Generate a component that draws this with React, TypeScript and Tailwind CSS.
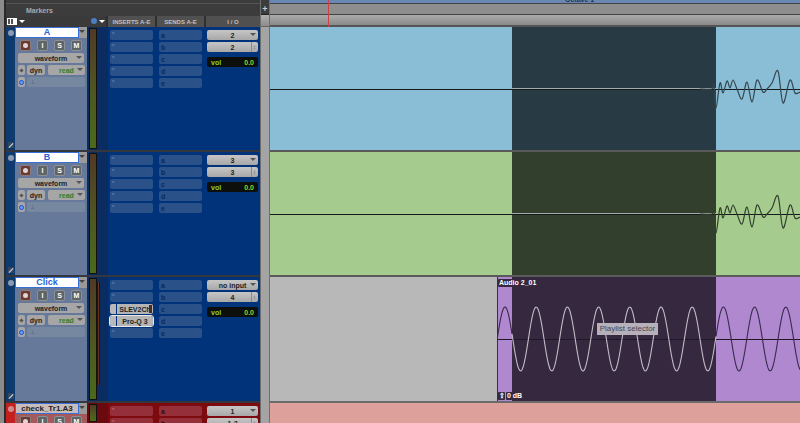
type Track = {
  name: string;
  input: string;
  output: string;
  inserts: (string | null)[];
  height: string;
};

// break points of the audio transient, x from the left of the drawing, y from the top of the lane
const TRANSIENT: [number, number][] = [
  [0, 62], [12, 62], [14, 58], [16, 81], [20, 56], [23, 66], [27, 54], [30, 61], [33, 53], [37, 62], [42, 72],
  [47, 55], [52, 75], [57, 53], [63, 65], [67, 62], [72, 56], [78, 44], [83, 76], [90, 53], [95, 66], [100, 65],
];

// Catmull-Rom through the points so the peaks stay where they are
function smoothPath(points: [number, number][]) {
  let d = `M${points[0][0]} ${points[0][1]}`;
  for (let i = 0; i < points.length - 1; i++) {
    const p0 = points[Math.max(i - 1, 0)];
    const p1 = points[i];
    const p2 = points[i + 1];
    const p3 = points[Math.min(i + 2, points.length - 1)];
    const c1x = p1[0] + (p2[0] - p0[0]) / 6;
    const c1y = p1[1] + (p2[1] - p0[1]) / 6;
    const c2x = p2[0] - (p3[0] - p1[0]) / 6;
    const c2y = p2[1] - (p3[1] - p1[1]) / 6;
    d += ` C${c1x} ${c1y} ${c2x} ${c2y} ${p2[0]} ${p2[1]}`;
  }
  return d;
}

function sinePath(from: number, to: number, mid: number, amp: number, period: number, peakAt: number) {
  const pts: string[] = [];
  for (let x = from; x <= to; x++) {
    const y = mid - amp * Math.cos(((x - peakAt) / period) * Math.PI * 2);
    pts.push(`${x === from ? "M" : "L"}${x} ${y.toFixed(2)}`);
  }
  return pts.join(" ");
}

function Chevron({ color = "border-t-[#555]" }: { color?: string }) {
  return <span className={`absolute right-[2px] top-[3px] h-0 w-0 border-x-[3px] border-t-[3px] border-x-transparent ${color}`} />;
}

function SmallButton({ label }: { label: string }) {
  return (
    <div className="flex h-[11px] w-[11px] items-center justify-center rounded-[2px] border border-[#8c9097] bg-[#5f6469] text-[7px] font-bold leading-none text-white">
      {label}
    </div>
  );
}

function TrackControls({ name, red }: { name: string; red?: boolean }) {
  return (
    <div className={`flex h-full w-[72px] shrink-0 flex-col ${red ? "bg-[#a45a5a]" : "bg-[#66799b]"}`}>
      <div className="flex h-[11px] shrink-0 items-stretch">
        {red ? (
          <div className="flex w-[64px] items-center justify-center overflow-hidden border border-[#3b6fd8] bg-[#c8bcbc] text-[8px] font-bold leading-none text-[#222]">
            {name}
          </div>
        ) : (
          <div className="flex w-[64px] items-center justify-center overflow-hidden border border-[#3b6fd8] bg-white text-[9px] font-bold leading-none text-[#2b63d8]">
            {name}
          </div>
        )}
        <div className="relative flex-1 bg-[#9a9a9a]">
          <Chevron color="border-t-[#444]" />
        </div>
      </div>
      <div className="mt-[2px] flex gap-[6px] pl-[5px]">
        <div className="flex h-[11px] w-[11px] items-center justify-center rounded-[2px] border border-[#8c7c7a] bg-[#6b3a36]">
          <span className="h-[5px] w-[5px] rounded-full bg-[#e0d4d4]" />
        </div>
        <SmallButton label="I" />
        <SmallButton label="S" />
        <SmallButton label="M" />
      </div>
      <div className="relative mx-[3px] mt-[2px] flex h-[10px] shrink-0 items-center justify-center rounded-[2px] bg-[#a6a6a6] text-[7px] font-bold leading-none text-[#222]">
        waveform
        <Chevron />
      </div>
      <div className="mt-[2px] flex h-[10px] shrink-0 pl-[3px]">
        <div className="flex w-[7px] items-center justify-center rounded-[2px] bg-[#a6a6a6]">
          <span className="h-[3px] w-[3px] rotate-45 bg-[#555]" />
        </div>
        <div className="ml-[2px] flex w-[18px] items-center justify-center rounded-[2px] bg-[#a6a6a6] text-[7px] font-bold leading-none text-[#222]">
          dyn
        </div>
        <div className="relative ml-[3px] flex w-[37px] items-center justify-center rounded-[2px] bg-[#a6a6a6] text-[7px] font-bold leading-none text-[#2f7d2f]">
          read
          <Chevron />
        </div>
      </div>
      <div className="mt-[2px] flex h-[10px] shrink-0 pl-[3px]">
        <div className="flex w-[7px] items-center justify-center rounded-[2px] bg-[#a6a6a6]">
          <span className="h-[5px] w-[5px] rounded-full border border-[#1c4fd0] bg-[#6d9cf0]" />
        </div>
        <div className="ml-[2px] mr-[2px] flex flex-1 items-center rounded-[2px] bg-[#76889f] pl-[3px] text-[6px] leading-none text-[#505a68]">
          ⊥
        </div>
      </div>
    </div>
  );
}

function Sends({ items, slotColor, textColor }: { items: string[]; slotColor: string; textColor: string }) {
  return (
    <div className="flex w-[49px] shrink-0 flex-col gap-[2px] px-[3px] pt-[3px]">
      {items.map((item) => (
        <div key={item} className={`flex h-[10px] shrink-0 items-center rounded-[2px] pl-[2px] text-[7px] font-bold leading-none ${slotColor} ${textColor}`}>
          {item}
        </div>
      ))}
    </div>
  );
}

function Inserts({ items, slotColor, textColor }: { items: (string | null)[]; slotColor: string; textColor: string }) {
  return (
    <div className="flex w-[48px] shrink-0 flex-col gap-[2px] pl-[2px] pr-[3px] pt-[3px]">
      {items.map((item, i) =>
        item ? (
          <div
            key={i}
            className={`flex h-[10px] shrink-0 items-stretch gap-[1px] rounded-[2px] text-[7px] font-bold leading-none text-[#222] ${i === 3 ? "outline outline-1 outline-[#e8e8e8]" : ""}`}
          >
            <div className="w-[6px] rounded-l-[2px] bg-[#b9b9b9]" />
            <div className="relative flex flex-1 items-center justify-center rounded-r-[2px] bg-[#b4b4b4]">
              {item}
              {i === 2 && <span className="absolute right-[1px] top-[1px] h-[8px] w-[3px] bg-[#4d2c20]" />}
            </div>
          </div>
        ) : (
          <div key={i} className={`flex h-[10px] shrink-0 items-start rounded-[2px] pl-[2px] pt-[1px] text-[6px] leading-none ${slotColor} ${textColor}`}>
            *
          </div>
        ),
      )}
    </div>
  );
}

function IOColumn({ input, output }: { input: string; output: string }) {
  return (
    <div className="flex w-[53px] shrink-0 flex-col pl-[2px] pt-[3px]">
      <div className="relative flex h-[10px] shrink-0 items-center justify-center rounded-[2px] bg-gradient-to-b from-[#c6c6c6] to-[#a8a8a8] text-[7px] font-bold leading-none text-[#222]">
        {input}
        <Chevron />
      </div>
      <div className="relative mt-[2px] flex h-[10px] shrink-0 items-center justify-center rounded-[2px] bg-gradient-to-b from-[#c6c6c6] to-[#a8a8a8] text-[7px] font-bold leading-none text-[#222]">
        {output}
        <span className="absolute right-[1px] top-0 flex h-full w-[6px] items-center justify-center border-l border-[#8a8a8a] text-[6px] leading-none text-[#666]">
          ↕
        </span>
      </div>
      <div className="mt-[5px] flex h-[10px] shrink-0 items-center justify-between rounded-[2px] bg-[#0d0f0d] px-[4px] text-[7px] font-bold leading-none text-[#8fd42a]">
        <span>vol</span>
        <span>0.0</span>
      </div>
    </div>
  );
}

// level meter plus the dark run up to the inserts column
function Meter({ peak, gutter }: { peak?: boolean; gutter: string }) {
  return (
    <div className={`relative h-full w-[21px] shrink-0 ${gutter}`}>
      <div className="absolute bottom-[1px] left-[2px] top-[1px] w-[8px] border border-[#111] bg-gradient-to-b from-[#4f3a26] via-[#4f5522] to-[#4b6a1a]" />
      {peak && <div className="absolute left-[10px] top-[5px] h-[103px] w-[3px] border-x border-[#1c1410] bg-[#6a3420]" />}
    </div>
  );
}

function TrackRow({ track }: { track: Track }) {
  return (
    <div className={`flex ${track.height} shrink-0 border-b-2 border-[#34373d]`}>
      <div className="flex w-[9px] shrink-0 flex-col items-center justify-between bg-[#0f3a70] pb-[2px] pt-[3px]">
        <span className="h-[6px] w-[6px] rounded-full bg-[#8c9bb0]" />
        <span className="flex h-[6px] w-[6px] items-center justify-center bg-[#33475f]">
          <span className="h-[1px] w-[6px] -rotate-45 bg-[#d8dde4]" />
        </span>
      </div>
      <TrackControls name={track.name} />
      <Meter peak={track.name === "Click"} gutter="bg-[#0a2c60]" />
      <div className="flex flex-1 bg-[#01337a]">
        <Inserts items={track.inserts} slotColor="bg-[#2a5188]" textColor="text-[#7b8fb0]" />
        <Sends items={["a", "b", "c", "d", "e"]} slotColor="bg-[#2a5188]" textColor="text-[#0d2a55]" />
        <IOColumn input={track.input} output={track.output} />
      </div>
    </div>
  );
}

function AudioLane({ light, dark, stroke }: { light: string; dark: string; stroke: string }) {
  return (
    <div className={`relative flex h-[125px] shrink-0 border-b-2 border-[#5a5a5a] ${light}`}>
      <div className="w-[242px]" />
      <div className={`w-[204px] ${dark}`} />
      <div className="absolute left-[242px] top-[61px] h-[1px] w-[204px] bg-[#a3abad]" />
      <div className="absolute left-0 right-0 top-[62px] h-[1px] bg-[#14191a]" />
      <svg className="absolute left-[430px] top-0 h-[123px] w-[100px]" viewBox="0 0 100 123" fill="none">
        <path d={smoothPath(TRANSIENT)} stroke={stroke} strokeWidth="1.2" />
      </svg>
    </div>
  );
}

function ClickLane() {
  return (
    <div className="relative flex h-[126px] shrink-0 border-b-2 border-[#6b6b6b] bg-[#b8b8b8]">
      <div className="w-[227px]" />
      <div className="w-[15px] border-l border-[#3b2a4d] bg-[#b088d0]" />
      <div className="w-[204px] bg-[#35283f]" />
      <div className="flex-1 bg-[#b088d0]" />
      <div className="absolute left-[227px] right-0 top-[62px] h-[1px] bg-[#1f1828]" />
      <svg className="absolute left-[227px] top-0 h-[124px] w-[303px]" viewBox="0 0 303 124" fill="none">
        <path d={sinePath(0, 15, 62, 32, 31.2, 8)} stroke="#3b2a4d" strokeWidth="1.1" />
        <path d={sinePath(15, 219, 62, 32, 31.2, 8)} stroke="#c2bcc6" strokeWidth="1.1" />
        <path d={sinePath(219, 303, 62, 32, 31.2, 8)} stroke="#3b2a4d" strokeWidth="1.1" />
      </svg>
      <div className="absolute left-[228px] top-[2px] rounded-[1px] bg-[#35283f] px-[1px] text-[7px] font-bold leading-[8px] text-white">Audio 2_01</div>
      <div className="absolute bottom-[1px] left-[228px] flex items-center gap-[1px] text-[7px] font-bold leading-[8px] text-white">
        <span className="flex h-[8px] w-[7px] items-center justify-center rounded-[1px] bg-[#35283f]">⇧</span>
        <span className="rounded-[1px] bg-[#35283f] px-[1px]">0 dB</span>
      </div>
      <div className="absolute left-[327px] top-[46px] flex h-[12px] w-[61px] items-center justify-center bg-[#b5b0ba] text-[8px] leading-none text-[#4a4650]">
        Playlist selector
      </div>
    </div>
  );
}

const tracks: Track[] = [
  { name: "A", input: "2", output: "2", inserts: [null, null, null, null, null], height: "h-[125px]" },
  { name: "B", input: "3", output: "3", inserts: [null, null, null, null, null], height: "h-[125px]" },
  { name: "Click", input: "no input", output: "4", inserts: [null, null, "SLEV2Ch", "Pro-Q 3", null], height: "h-[126px]" },
];

export default function App() {
  return (
    <div className="flex h-[423px] w-[800px] overflow-hidden bg-[#3a3a3a] font-['Liberation_Sans',Arial,sans-serif]">
      {/* track list */}
      <div className="flex w-[260px] shrink-0">
        <div className="w-[6px] shrink-0 border-r-2 border-[#2a2a2a] bg-[#8c8c8c]" />
        <div className="flex min-w-0 flex-1 flex-col">
          <div className="h-[4px] shrink-0 border-b border-[#555] bg-[#3c3c3c]" />
          <div className="flex h-[12px] shrink-0 items-center bg-[#3c3c3c] pl-[20px] text-[7px] font-bold leading-none text-[#aaa]">Markers</div>
          <div className="flex h-[11px] shrink-0 gap-[2px] bg-[#2f2f2f]">
            <div className="relative flex w-[100px] items-center bg-[#3a3a3a] pl-[1px]">
              <div className="flex h-[7px] w-[10px] gap-[1px] bg-white p-[1px]">
                <span className="w-[2px] bg-[#555]" />
                <span className="w-[2px] bg-[#555]" />
              </div>
              <span className="ml-[2px] h-0 w-0 border-x-[3px] border-t-[3px] border-x-transparent border-t-white" />
              <span className="absolute left-[85px] top-[2px] h-[6px] w-[6px] rounded-full bg-[#4a7fc8]" />
              <span className="absolute left-[93px] top-[4px] h-0 w-0 border-x-[3px] border-t-[3px] border-x-transparent border-t-white" />
            </div>
            <div className="flex w-[47px] items-center justify-center bg-[#505050] text-[6px] font-bold leading-none text-[#c0c0c0]">INSERTS A-E</div>
            <div className="flex w-[47px] items-center justify-center bg-[#505050] text-[6px] font-bold leading-none text-[#c0c0c0]">SENDS A-E</div>
            <div className="flex flex-1 items-center justify-center bg-[#505050] text-[6px] font-bold leading-none text-[#c0c0c0]">I / O</div>
          </div>
          {tracks.map((t) => (
            <TrackRow key={t.name} track={t} />
          ))}
          <div className="flex min-h-0 flex-1 overflow-hidden">
            <div className="flex w-[9px] shrink-0 justify-center bg-[#c42020] pt-[3px]">
              <span className="h-[6px] w-[6px] rounded-full bg-[#d08a8a]" />
            </div>
            <TrackControls name="check_Tr1.A3" red />
            <Meter gutter="bg-[#6a0a0f]" />
            <div className="flex flex-1 bg-[#7c0a0f]">
              <Inserts items={[null, null]} slotColor="bg-[#95303a]" textColor="text-[#c08088]" />
              <Sends items={["a", "b"]} slotColor="bg-[#95303a]" textColor="text-[#3a0a0f]" />
              <IOColumn input="1" output="1-2" />
            </div>
          </div>
        </div>
      </div>

      {/* gutter between the list and the timeline */}
      <div className="flex w-[10px] shrink-0 flex-col border-x border-[#6e6e6e] bg-[#a4a4a4]">
        <div className="flex h-[15px] shrink-0 items-center justify-center border-b border-[#222] bg-[#3c3c3c] pt-[4px] text-[9px] font-bold leading-none text-[#ccc]">
          +
        </div>
        <div className="h-[12px] shrink-0 border-b border-[#666] bg-gradient-to-b from-[#b0b0b0] to-[#8c8c8c]" />
      </div>

      {/* timeline */}
      <div className="relative flex min-w-0 flex-1 flex-col">
        <div className="flex h-[4px] shrink-0 items-end overflow-hidden border-b border-[#444] bg-[#6a87b4] pl-[295px]">
          <span className="text-[7px] font-bold leading-[7px] text-[#26344a]">Octave 1</span>
        </div>
        <div className="h-[11px] shrink-0 border-b border-[#444] bg-[#8e8e8e]" />
        <div className="h-[12px] shrink-0 border-b-2 border-[#555] bg-gradient-to-b from-[#ababab] to-[#8a8a8a]" />
        <AudioLane light="bg-[#8abdd6]" dark="bg-[#283a44]" stroke="#34464f" />
        <AudioLane light="bg-[#a6cb8e]" dark="bg-[#313f2c]" stroke="#33402c" />
        <ClickLane />
        <div className="min-h-0 flex-1 bg-[#dea09b]" />
        <div className="absolute left-[58px] top-0 h-[27px] w-[1px] bg-[#c8444a]" />
      </div>
    </div>
  );
}
